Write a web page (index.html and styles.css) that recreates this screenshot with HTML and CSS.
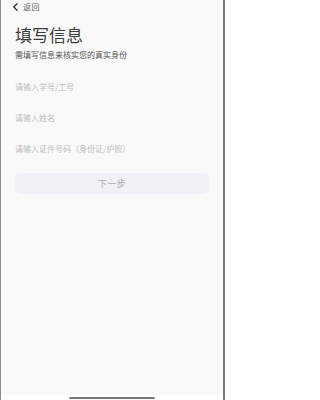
FILE: index.html
```html
<!DOCTYPE html>
<html lang="zh-CN">
<head>
<meta charset="utf-8">
<title>填写信息</title>
<link rel="stylesheet" href="styles.css">
</head>
<body>
<div class="phone">
  <div class="screen">
    <div class="nav">
      <svg class="back-icon" width="7" height="8" viewBox="0 0 7 8"><path d="M5 0.7 L1.8 4 L5 7.3" fill="none" stroke="#333" stroke-width="1.3" stroke-linecap="round" stroke-linejoin="round"/></svg>
      <span class="back-text">返回</span>
    </div>
    <h1 class="title">填写信息</h1>
    <p class="subtitle">需填写信息来核实您的真实身份</p>
    <form class="form">
      <div class="field"><input class="input" type="text" placeholder="请输入学号/工号"></div>
      <div class="field"><input class="input" type="text" placeholder="请输入姓名"></div>
      <div class="field"><input class="input" type="text" placeholder="请输入证件号码（身份证/护照）"></div>
      <button class="next" type="button">下一步</button>
    </form>
  </div>
  <div class="home-bar"><span class="indicator"></span></div>
</div>
</body>
</html>
```

FILE: styles.css
```css
* { box-sizing: border-box; }
html, body { margin: 0; padding: 0; }
body {
  font-family: "Noto Sans CJK SC", "Noto Sans", sans-serif;
  background: #fff;
}
.phone {
  width: 225px;
  height: 400px;
  display: flex;
  flex-direction: column;
  border-left: 1px solid #8c8c8c;
  border-right: 2px solid #7a7a7a;
}
.screen {
  flex: 1;
  background: #f9f9f9;
  padding: 0 13px 0 14px;
  display: flex;
  flex-direction: column;
}
.nav {
  height: 13px;
  display: flex;
  align-items: center;
  gap: 4px;
  margin-left: -3px;
}
.back-icon { display: block; }
.back-text {
  font-size: 8px;
  line-height: 10px;
  color: #666;
  letter-spacing: 0.5px;
}
.title {
  margin: 12px 0 0;
  font-size: 17px;
  line-height: 20px;
  font-weight: 400;
  color: #3a3a3a;
}
.subtitle {
  margin: 5px 0 0;
  font-size: 8px;
  line-height: 10px;
  color: #555;
}
.form {
  margin: 11px 0 0;
  display: flex;
  flex-direction: column;
}
.field {
  height: 31px;
  display: flex;
  align-items: center;
}
.input {
  width: 100%;
  border: none;
  outline: none;
  background: transparent;
  padding: 0;
  font-family: inherit;
  font-size: 8px;
  line-height: 10px;
  color: #333;
}
.input::placeholder { color: #bdbdbd; }
.next {
  margin-top: 9px;
  height: 21px;
  width: 194px;
  border: none;
  border-radius: 5px;
  background: #f0f1f6;
  color: #acacac;
  font-family: inherit;
  font-size: 9px;
  letter-spacing: 0.5px;
  padding: 0;
}
.home-bar {
  height: 5px;
  background: #fff;
  display: flex;
  justify-content: center;
  align-items: flex-end;
  padding-bottom: 1px;
}
.indicator {
  display: block;
  width: 86px;
  height: 2px;
  border-radius: 1px;
  background: #777;
}
```
